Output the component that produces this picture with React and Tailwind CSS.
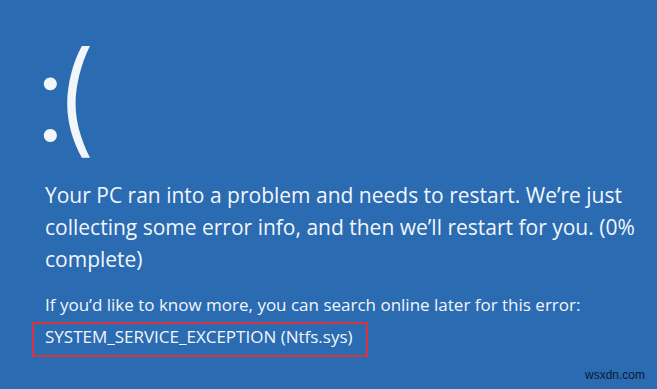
import React from "react";

export default function App() {
  return (
    <div className="relative w-[657px] h-[389px] overflow-hidden bg-[#2b6bb1] text-[#f2f6fb] pl-[45px] font-['Open_Sans',sans-serif]">
      {/* sad face */}
      <div className="h-[179px] pt-[32px] font-['Inter',sans-serif] font-light text-[123px] leading-[130px] -ml-[12px]">
        <span className="tracking-[-14px]">:</span>(
      </div>

      {/* main message */}
      <p className="text-[21px] leading-[32px] whitespace-nowrap">
        Your PC ran into a problem and needs to restart. We’re just
        <br />
        collecting some error info, and then we’ll restart for you. (0%
        <br />
        complete)
      </p>

      {/* more info */}
      <p className="mt-[19px] text-[17px] leading-[22px]">
        If you’d like to know more, you can search online later for this error:
      </p>
      <div className="-ml-[13px] mt-[6px] w-[336px] h-[35px] border-2 border-[#d8343d] pl-[11px] pt-[3px] text-[17px] leading-[20px]">
        SYSTEM_SERVICE_EXCEPTION (Ntfs.sys)
      </div>

      {/* watermark */}
      <div className="absolute right-[12px] bottom-[5px] text-[12px] text-[#0b1a33] font-['Liberation_Sans',sans-serif]">
        wsxdn.com
      </div>
    </div>
  );
}
